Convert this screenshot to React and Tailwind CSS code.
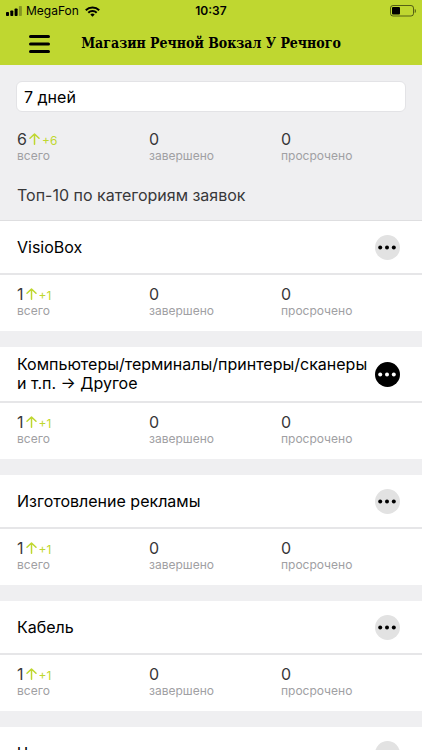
const categories = [
    { name: 'VisioBox', total: 1 },
    { name: 'Компьютеры/терминалы/принтеры/сканеры и т.п. → Другое', total: 1, active: true },
    { name: 'Изготовление рекламы', total: 1 },
    { name: 'Кабель', total: 1 },
    { name: 'Чистка', total: 1 },
];

function StatusBar() {
    return (
        <div className="grid grid-cols-3 items-center h-[22px] px-[6px] text-[12px] text-black">
            <div className="flex items-center">
                <svg viewBox="0 0 17 10" className="w-[17px] h-[10px]">
                    <rect x="0" y="6" width="3" height="4" rx="0.8" />
                    <rect x="4.3" y="4.5" width="3" height="5.5" rx="0.8" />
                    <rect x="8.6" y="2.5" width="3" height="7.5" rx="0.8" />
                    <rect x="12.9" y="0" width="3" height="10" rx="0.8" opacity="0.3" />
                </svg>
                <span className="ml-[3px]">MegaFon</span>
                <svg viewBox="0 0 15 11" className="ml-[6px] w-[15px] h-[11px]" fill="none" stroke="black" strokeWidth="2">
                    <path d="M0.8 4.2a9.5 9.5 0 0 1 13.4 0" />
                    <path d="M3.3 6.8a6 6 0 0 1 8.4 0" />
                    <path d="M7.5 10.8 5.3 8.6a3.1 3.1 0 0 1 4.4 0z" fill="black" stroke="none" />
                </svg>
            </div>
            <div className="text-center text-[12px] font-semibold">10:37</div>
            <svg viewBox="0 0 26 12" className="justify-self-end w-[26px] h-[12px]" fill="none">
                <rect x="0.5" y="0.5" width="23" height="10.5" rx="2.5" stroke="black" strokeOpacity="0.55" />
                <rect x="2" y="2" width="8" height="7.5" rx="1" fill="black" />
                <path d="M24.7 4v4c1-.4 1.3-1.2 1.3-2s-.3-1.6-1.3-2z" fill="black" fillOpacity="0.5" />
            </svg>
        </div>
    );
}

function Stats({ total }) {
    return (
        <dl className="grid grid-cols-3 pl-[17px] pr-[9px] text-[12px] leading-4 text-[#a0a0a3]">
            <div className="flex flex-col-reverse">
                <dt>всего</dt>
                <dd className="flex items-baseline h-[18px] text-base leading-[18px] text-[#38383a]">
                    {total}
                    <svg viewBox="0 0 11 12" className="ml-[2px] w-[11px] h-[12px]" fill="none" stroke="#bfd730" strokeWidth="1.5" strokeLinecap="round" strokeLinejoin="round">
                        <path d="M5.5 11.2V1M1 5.3 5.5 1 10 5.3" />
                    </svg>
                    <span className="ml-[2px] text-[12px] leading-[18px] text-[#bfd730]">+{total}</span>
                </dd>
            </div>
            <div className="flex flex-col-reverse">
                <dt>завершено</dt>
                <dd className="h-[18px] text-base leading-[18px] text-[#38383a]">0</dd>
            </div>
            <div className="flex flex-col-reverse">
                <dt>просрочено</dt>
                <dd className="h-[18px] text-base leading-[18px] text-[#38383a]">0</dd>
            </div>
        </dl>
    );
}

function MoreButton({ active }) {
    return (
        <button aria-label="Ещё" className={active ? 'shrink-0 rounded-full bg-black text-white' : 'shrink-0 rounded-full bg-[#e2e2e2] text-black'}>
            <svg viewBox="0 0 25 25" className="w-[25px] h-[25px]" fill="currentColor">
                <circle cx="5.2" cy="12.5" r="2" />
                <circle cx="12" cy="12.5" r="2" />
                <circle cx="18.8" cy="12.5" r="2" />
            </svg>
        </button>
    );
}

function CategoryCard({ category }) {
    return (
        <section className="shrink-0 bg-white">
            <div className="flex items-center justify-between min-h-[54px] py-2 pl-[17px] pr-[22px] border-b-2 border-[#e6e6e8]">
                <h3 className="text-base leading-[19px] text-black">{category.name}</h3>
                <MoreButton active={category.active} />
            </div>
            <div className="pt-[10px] pb-3">
                <Stats total={category.total} />
            </div>
        </section>
    );
}

export default function App() {
    return (
        <div className="flex flex-col h-screen bg-[#efeff1] font-['Inter','Liberation_Sans',sans-serif]">
            <header className="shrink-0 bg-[#bfd730]">
                <StatusBar />
                <div className="flex items-center h-[43px] px-[29px]">
                    <button aria-label="Меню">
                        <svg viewBox="0 0 21 18" className="w-[21px] h-[18px]" stroke="black" strokeWidth="3" strokeLinecap="round">
                            <path d="M1.5 1.5h18M1.5 9h18M1.5 16.5h18" />
                        </svg>
                    </button>
                    <h1 className="grow pr-[21px] text-center text-[14px] font-bold text-black whitespace-nowrap font-['DejaVu_Serif_Condensed','DejaVu_Serif',serif]">Магазин Речной Вокзал У Речного</h1>
                </div>
            </header>
            <main className="grow overflow-y-auto [scrollbar-width:none]">
                <div className="pt-4 border-b border-[#dedee0]">
                    <div className="px-4">
                        <select aria-label="Период" className="appearance-none block w-full h-[31px] px-[7px] rounded-md border border-[#e3e3e6] bg-white text-base text-black">
                            <option>7 дней</option>
                        </select>
                    </div>
                    <div className="pt-[18px]">
                        <Stats total={6} />
                    </div>
                    <h2 className="pt-5 pb-[14px] px-[17px] text-base leading-[22px] text-[#38383a]">Топ-10 по категориям заявок</h2>
                </div>
                <div className="flex flex-col gap-4">
                    {categories.map((category) => (
                        <CategoryCard key={category.name} category={category} />
                    ))}
                </div>
            </main>
        </div>
    );
}
